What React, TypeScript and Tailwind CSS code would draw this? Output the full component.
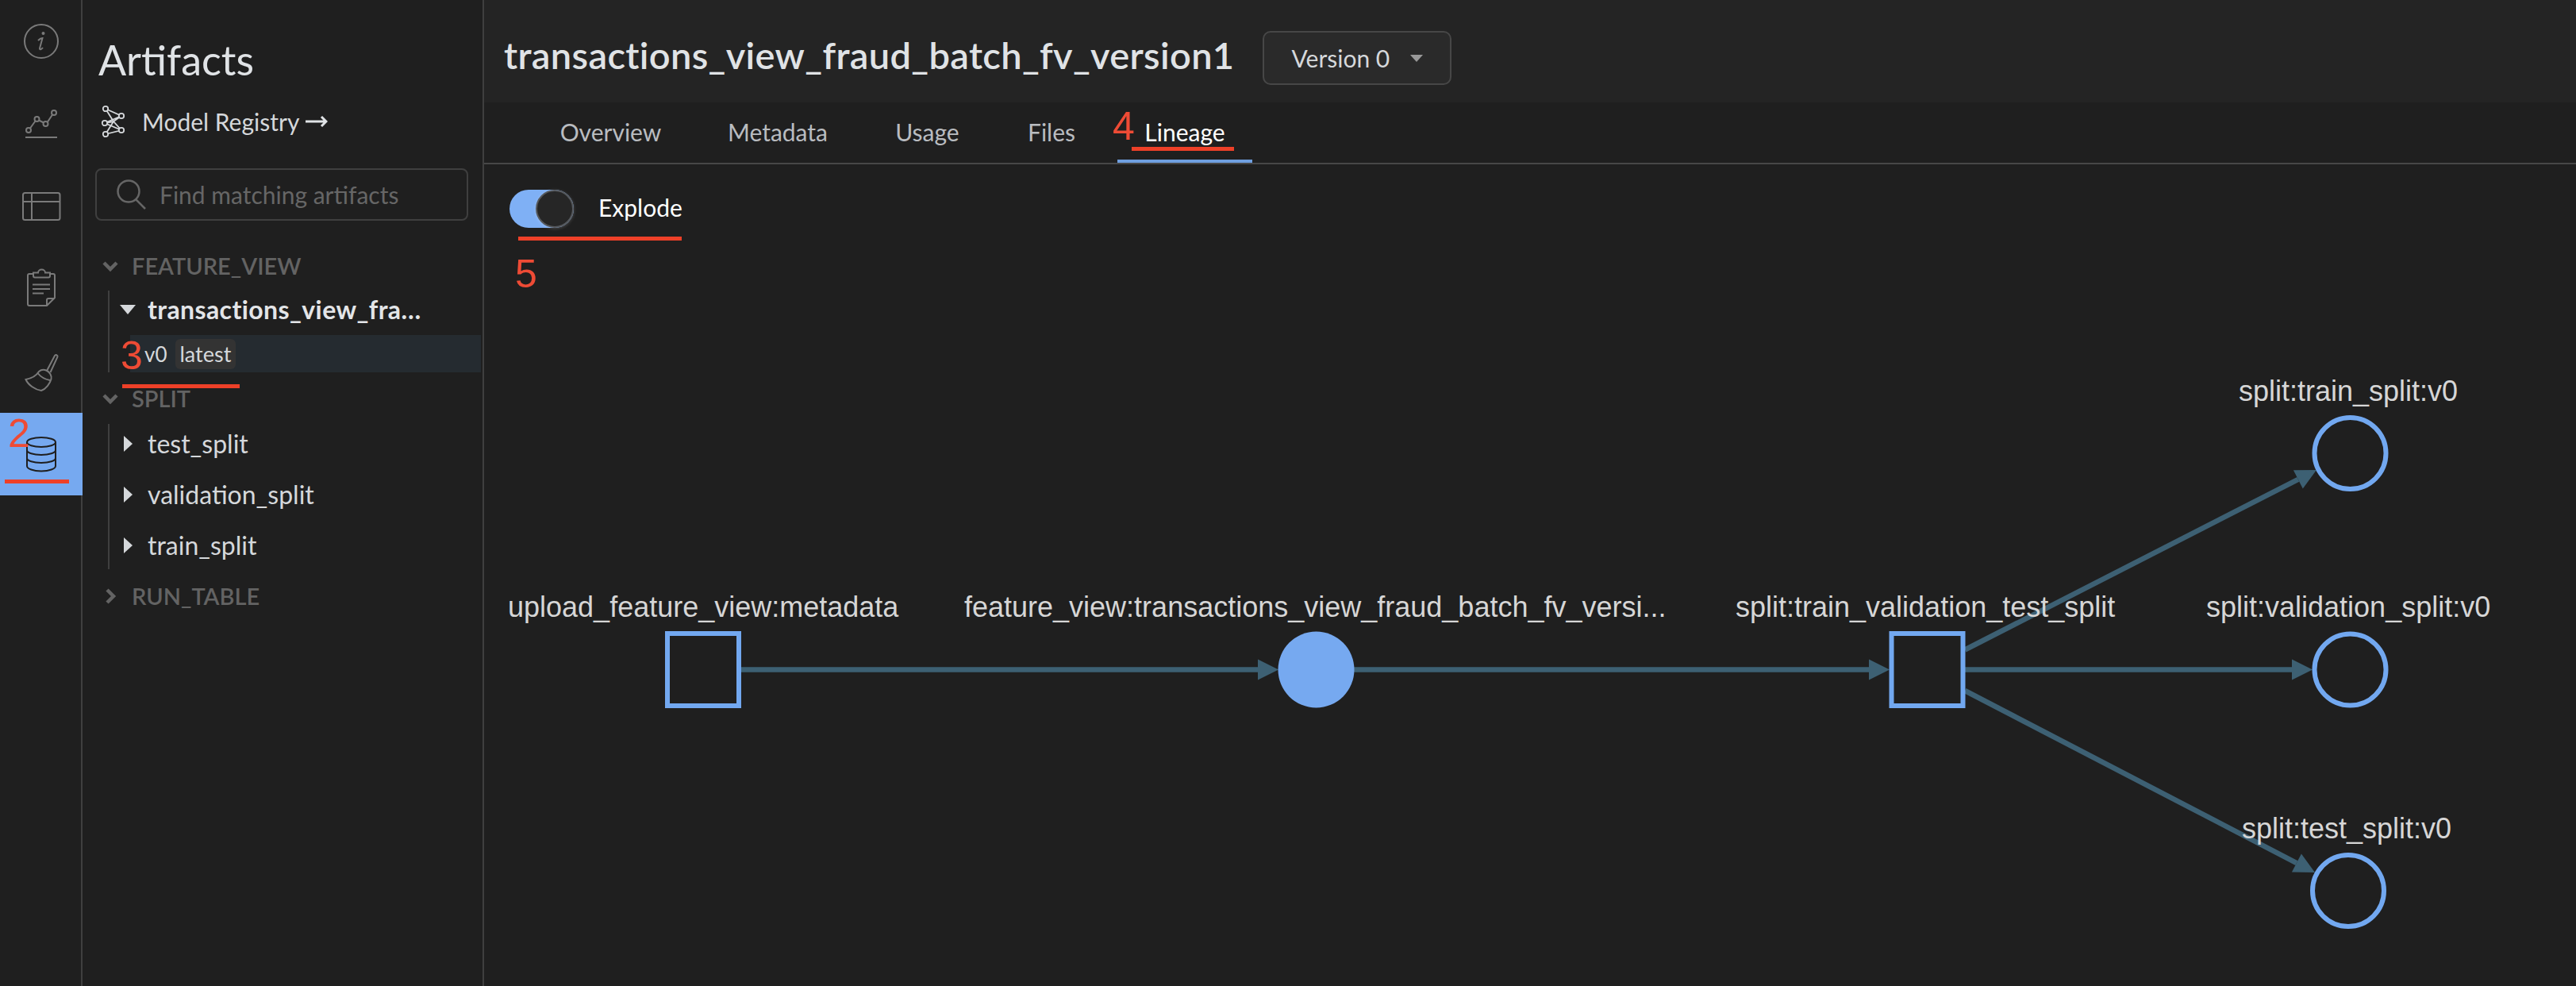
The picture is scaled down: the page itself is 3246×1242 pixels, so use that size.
import React from "react";

const Red = "text-[#ee4b35]";

const RailItem = ({ box, active, children }: { box: string; active?: boolean; children: React.ReactNode }) => (
  <div className={`flex h-[104px] w-[104px] items-center justify-center ${active ? "bg-[#76a9f0]" : ""}`}>
    <svg viewBox={box} className="h-[60px] w-[60px]" fill="none" stroke={active ? "#1f1f1f" : "#7a7a7a"} strokeWidth="2">
      {children}
    </svg>
  </div>
);

const Rail = () => (
  <div className="w-[104px] shrink-0 border-r-2 border-[#3f3f3f]">
    <RailItem box="22 22 60 60">
      <circle cx="52" cy="52" r="21" />
      <circle cx="54.500" cy="42" r="2" fill="#7a7a7a" stroke="none" />
      <path d="M48 51c2-2 4-3 5.500-3l-3.500 13c-.3 2 2 1.500 4-1" />
    </RailItem>
    <RailItem box="22 126 60 60">
      <path d="M32 173h40" />
      <circle cx="36" cy="164" r="3" />
      <circle cx="46.500" cy="150" r="3" />
      <circle cx="57.500" cy="156" r="3" />
      <circle cx="68" cy="142" r="3" />
      <path d="M38 161.500l6.500-9M49 151.500l6 3M60 153.500l6-9" />
    </RailItem>
    <RailItem box="22 230 60 60">
      <rect x="29" y="243" width="46.500" height="34" rx="2.500" />
      <path d="M29 254h46.500M40 243v34" />
    </RailItem>
    <RailItem box="22 334 60 60">
      <path d="M42 345h-5a2 2 0 0 0-2 2v36a2 2 0 0 0 2 2h22l10-10v-28a2 2 0 0 0-2-2h-4" />
      <path d="M42 343.500h6a4.500 4 0 0 1 9 0h6v4a2 2 0 0 1-2 2h-17a2 2 0 0 1-2-2z" />
      <path d="M41 358.500h22M41 364h22M41 369.500h14M59 385v-7a2 2 0 0 1 2-2h8" />
    </RailItem>
    <RailItem box="22 438 60 60">
      <path d="M59 467l10-19c1-2 4-.500 3.500 1.500l-9 19.500" />
      <path d="M59 467c-3-1.500-7-1.500-10 1-3 5-9 8.500-16.500 10 3 7 12 13 19.500 14 6-2 11-9 12.500-14.500 1-4-2-9-5.500-10.500z" />
      <path d="M47.500 470c4 5 10 8 15.500 9" />
    </RailItem>
    <RailItem box="22 542 60 60" active>
      <ellipse cx="52" cy="557" rx="18" ry="6" />
      <path d="M34 557v30c0 3.500 8 6.500 18 6.500s18-3 18-6.500v-30M34 567c0 3.500 8 6 18 6s18-2.500 18-6M34 577c0 3.500 8 6 18 6s18-2.500 18-6" />
    </RailItem>
  </div>
);

const SectionHeader = ({ label, open }: { label: string; open: boolean }) => (
  <div className="ml-[23px] flex h-[40px] items-center gap-[15px] text-[29px] font-semibold text-[#636363]">
    <svg viewBox="0 0 24 24" className="h-[24px] w-[24px]" fill="none" stroke="#636363" strokeWidth="4.500">
      <path d={open ? "M4 8l8 8 8-8" : "M8 4l8 8-8 8"} />
    </svg>
    {label}
  </div>
);

const Caret = ({ open }: { open?: boolean }) => (
  <svg viewBox="0 0 20 20" className="h-[20px] w-[20px] shrink-0" fill="#d5d8db">
    <path d={open ? "M0 4h20L10 16z" : "M5 0l11 10L5 20z"} />
  </svg>
);

const TreeRow = ({ label }: { label: string }) => (
  <div className="mt-[14px] flex h-[50px] items-center gap-[15px] pl-[13px] text-[32px] text-[#d5d8db] first:mt-0">
    <Caret />
    {label}
  </div>
);

const Sidebar = () => (
  <div className="w-[506px] shrink-0 border-r-2 border-[#3f3f3f]">
    <div className="mt-[42px] h-[66px] pl-[20px] text-[52px] leading-[66px] text-[#e0e3e6]">Artifacts</div>
    <div className="mt-[23px] ml-[23px] flex h-[44px] items-center text-[30px] text-[#d5d8db]">
      <svg viewBox="0 0 32 44" className="mr-[20px] h-[44px] w-[32px]" fill="none" stroke="#d5d8db" strokeWidth="1.800">
        <path d="M6 6l20 9-21 9 21 9L6 38M6 6l10 16 10-7M5 24l11-2 10 11M6 38l10-16" />
        <circle cx="6" cy="6" r="3.200" fill="#1f1f1f" />
        <circle cx="5" cy="24" r="3.200" fill="#1f1f1f" />
        <circle cx="6" cy="38" r="3.200" fill="#1f1f1f" />
        <circle cx="26" cy="15" r="3.200" fill="#1f1f1f" />
        <circle cx="26" cy="33" r="3.200" fill="#1f1f1f" />
      </svg>
      Model Registry
      <svg viewBox="0 0 28 16" className="ml-[8px] h-[16px] w-[28px]" fill="none" stroke="#e0e3e6" strokeWidth="3">
        <path d="M0 8h26M20 2l6 6-6 6" />
      </svg>
    </div>
    <div className="mt-[37px] ml-[16px] flex h-[66px] w-[470px] items-center rounded-[8px] border-2 border-[#3f3f3f] pl-[25px] text-[30px] text-[#666666]">
      <svg viewBox="0 0 38 38" className="mr-[16px] h-[38px] w-[38px]" fill="none" stroke="#666666" strokeWidth="2.500">
        <circle cx="15" cy="15" r="13.500" />
        <path d="M24 25l12 12" />
      </svg>
      Find matching artifacts
    </div>

    <div className="mt-[37px]">
      <SectionHeader label="FEATURE_VIEW" open />
    </div>
    <div className="mt-[11px] ml-[32px] border-l-2 border-[#3f3f3f]">
      <div className="mb-[8px] flex h-[48px] items-center gap-[15px] pl-[13px] text-[32px] font-bold tracking-[0.4px] text-[#e3e5e8]">
        <Caret open />
        <span className="w-[347px] truncate">transactions_view_fraud_batch_fv_version1</span>
      </div>
      <div className="ml-[26px] flex h-[47px] w-[442px] items-center bg-[#252b30] pt-[1px] pl-[18px] text-[26px] text-[#d5d8db]">
        v0
        <span className="ml-[10px] flex h-[38px] items-center rounded-[6px] bg-[#333333] px-[6px] text-[27px]">latest</span>
      </div>
    </div>

    <div className="mt-[13px]">
      <SectionHeader label="SPLIT" open />
    </div>
    <div className="mt-[12px] ml-[32px] border-l-2 border-[#3f3f3f] pb-[5px]">
      <TreeRow label="test_split" />
      <TreeRow label="validation_split" />
      <TreeRow label="train_split" />
    </div>
    <div className="mt-[14px]">
      <SectionHeader label="RUN_TABLE" open={false} />
    </div>
  </div>
);

const tabs = [
  { label: "Overview", width: "w-[191px]" },
  { label: "Metadata", width: "w-[190px]" },
  { label: "Usage", width: "w-[147px]" },
  { label: "Files", width: "w-[126px]" },
  { label: "Lineage", width: "w-[170px]" },
];

const Header = () => (
  <>
    <div className="flex h-[129px] items-center bg-[#242424] pt-[17px] pl-[25px]">
      <div className="-mt-[8px] text-[47px] font-semibold tracking-[0.35px] text-[#e0e3e6]">transactions_view_fraud_batch_fv_version1</div>
      <div className="ml-[35px] flex h-[68px] w-[238px] items-center rounded-[10px] border-2 border-[#474747] bg-[#2a2a2a] pl-[35px] text-[30px] text-[#d5d8db]">
        Version 0
        <svg viewBox="0 0 16 9" className="ml-[26px] h-[9px] w-[16px]" fill="#999999">
          <path d="M0 0h16L8 9z" />
        </svg>
      </div>
    </div>
    <div className="flex h-[78px] gap-[20px] border-b-2 border-[#474747] pl-[64px]">
      {tabs.map((tab) => (
        <div
          key={tab.label}
          className={`flex items-center justify-center border-b-4 pt-[3px] text-[30px] ${tab.width} ${
            tab.label === "Lineage" ? "border-[#6f9fe0] text-white" : "border-transparent text-[#b9bcc0]"
          }`}
        >
          {tab.label}
        </div>
      ))}
    </div>
  </>
);

const Toggle = () => (
  <div className="flex h-[93px] items-start pl-[32px] pt-[32px]">
    <div className="relative h-[48px] w-[81px] rounded-full bg-[#7fb0f5]">
      <div className="absolute top-0 right-0 h-[48px] w-[48px] rounded-full border-2 border-[#55585c] bg-[#262626] shadow-[0_1px_4px_rgba(255,255,255,0.2)]" />
    </div>
    <div className="ml-[31px] flex h-[44px] items-center text-[30px] text-white">Explode</div>
  </div>
);

const labels: [string, number, number][] = [
  ["upload_feature_view:metadata", 640, 777],
  ["feature_view:transactions_view_fraud_batch_fv_versi...", 1215, 777],
  ["split:train_validation_test_split", 2187, 777],
  ["split:validation_split:v0", 2780, 777],
  ["split:train_split:v0", 2821, 505],
  ["split:test_split:v0", 2825, 1056],
];

const squares = [886, 2428.5];
const circles: [number, number][] = [
  [2961.5, 571],
  [2961.5, 843.5],
  [2959, 1122],
];

const Arrow = ({ x1, y1, x2, y2 }: { x1: number; y1: number; x2: number; y2: number }) => {
  const a = Math.atan2(y2 - y1, x2 - x1);
  const bx = x2 - 26 * Math.cos(a);
  const by = y2 - 26 * Math.sin(a);
  const nx = 13 * Math.sin(a);
  const ny = 13 * Math.cos(a);
  return (
    <g>
      <line x1={x1} y1={y1} x2={bx} y2={by} stroke="#3d6073" strokeWidth="6.500" />
      <polygon points={`${x2},${y2} ${bx + nx},${by - ny} ${bx - nx},${by + ny}`} fill="#3d6073" />
    </g>
  );
};

const Graph = () => (
  <svg viewBox="610 300 2636 942" className="block h-[942px] w-[2636px]" fontFamily="'Liberation Sans', Arial, sans-serif">
    <Arrow x1={934} y1={843.5} x2={1611} y2={843.5} />
    <Arrow x1={1706} y1={843.5} x2={2381} y2={843.5} />
    <Arrow x1={2476} y1={843.5} x2={2914} y2={843.5} />
    <Arrow x1={2476} y1={818.5} x2={2919} y2={592} />
    <Arrow x1={2476} y1={870} x2={2917} y2={1099} />
    {squares.map((x) => (
      <rect key={x} x={x - 45} y={798} width={90} height={91} fill="none" stroke="#72a8f0" strokeWidth="6" />
    ))}
    <circle cx={1658.500} cy={843.500} r={48} fill="#76a9f0" />
    {circles.map(([x, y]) => (
      <circle key={y} cx={x} cy={y} r={45} fill="none" stroke="#72a8f0" strokeWidth="6" />
    ))}
    {labels.map(([text, x, y]) => (
      <text key={text} x={x} y={y} fontSize="36" fill="#d6d6d6">
        {text}
      </text>
    ))}
  </svg>
);

const Marks = () => (
  <>
    <div className={`absolute top-[518px] left-[10px] font-['Liberation_Sans'] text-[50px] leading-[56px] ${Red}`}>2</div>
    <div className="absolute top-[604px] left-[6px] h-[5px] w-[81px] bg-[#ee4028]" />
    <div className={`absolute top-[420px] left-[152px] font-['Liberation_Sans'] text-[50px] leading-[56px] ${Red}`}>3</div>
    <div className="absolute top-[484px] left-[154px] h-[5px] w-[148px] bg-[#ee4028]" />
    <div className={`absolute top-[131px] left-[1402px] font-['Liberation_Sans'] text-[50px] leading-[56px] ${Red}`}>4</div>
    <div className="absolute top-[185px] left-[1426px] h-[5px] w-[129px] bg-[#ee4028]" />
    <div className="absolute top-[298px] left-[653px] h-[5px] w-[206px] bg-[#ee4028]" />
    <div className={`absolute top-[317px] left-[649px] font-['Liberation_Sans'] text-[50px] leading-[56px] ${Red}`}>5</div>
  </>
);

export default function App() {
  return (
    <div className="relative flex h-[1242px] w-[3246px] overflow-hidden bg-[#1f1f1f] font-['Lato',sans-serif]">
      <Rail />
      <Sidebar />
      <div className="min-w-0 flex-1">
        <Header />
        <Toggle />
        <Graph />
      </div>
      <Marks />
    </div>
  );
}
